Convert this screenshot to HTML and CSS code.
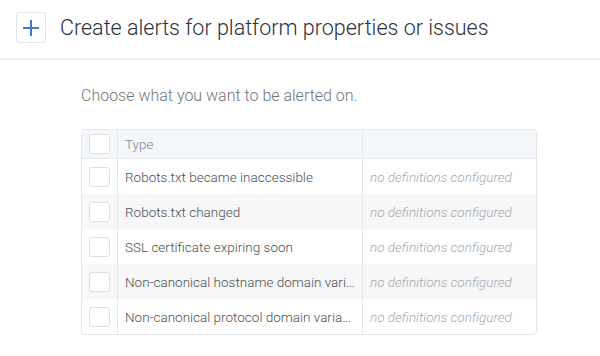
FILE: index.html
```html
<!DOCTYPE html>
<html>
<head>
<meta charset="utf-8">
<link rel="stylesheet" href="styles.css">
</head>
<body>
<header class="header">
  <div class="plus-box">
    <svg width="16" height="16" viewBox="0 0 16 16"><path d="M8 0V16M0 8H16" stroke="#3d7cc9" stroke-width="2" fill="none"/></svg>
  </div>
  <h1 class="title">Create alerts for platform properties or issues</h1>
</header>
<main class="content">
  <p class="lead">Choose what you want to be alerted on.</p>
  <div class="table">
    <div class="row head">
      <div class="cell check"><span class="box"></span></div>
      <div class="cell type">Type</div>
      <div class="cell def"></div>
    </div>
    <div class="row">
      <div class="cell check"><span class="box"></span></div>
      <div class="cell type">Robots.txt became inaccessible</div>
      <div class="cell def">no definitions configured</div>
    </div>
    <div class="row alt">
      <div class="cell check"><span class="box"></span></div>
      <div class="cell type">Robots.txt changed</div>
      <div class="cell def">no definitions configured</div>
    </div>
    <div class="row">
      <div class="cell check"><span class="box"></span></div>
      <div class="cell type">SSL certificate expiring soon</div>
      <div class="cell def">no definitions configured</div>
    </div>
    <div class="row alt">
      <div class="cell check"><span class="box"></span></div>
      <div class="cell type">Non-canonical hostname domain vari…</div>
      <div class="cell def">no definitions configured</div>
    </div>
    <div class="row">
      <div class="cell check"><span class="box"></span></div>
      <div class="cell type">Non-canonical protocol domain varia…</div>
      <div class="cell def">no definitions configured</div>
    </div>
  </div>
</main>
</body>
</html>
```
FILE: styles.css
```css
* { box-sizing: border-box; }
html, body { margin: 0; padding: 0; background: #fff; }
body { font-family: Roboto, "Liberation Sans", sans-serif; color: #333; width: 600px; height: 356px; overflow: hidden; }

.header {
  display: flex;
  align-items: center;
  height: 60px;
  padding: 0 0 3px 16px;
  border-bottom: 2px solid #f0f0f0;
}
.plus-box {
  width: 30px;
  height: 31px;
  border: 1px solid #e3e6ea;
  border-radius: 3px;
  display: flex;
  align-items: center;
  justify-content: center;
}
.title {
  margin: 0 0 0 14px;
  font-size: 21.5px;
  font-weight: 300;
  color: #2a313b;
}

.content { padding: 0 63px 0 81px; }
.lead {
  margin: 26px 0 23px;
  font-size: 16px;
  line-height: 20px;
  color: #72767a;
  font-weight: 300;
}
.table {
  width: 456px;
  border: 1px solid #e6e8eb;
  border-radius: 4px;
  overflow: hidden;
  font-size: 13.5px;
  font-weight: 300;
}
.row {
  display: flex;
  height: 35px;
}
.row.head {
  height: 29px;
  background: #f4f7fa;
  border-bottom: 1px solid #e6e8eb;
}
.row.alt { background: #f7f7f7; }
.cell {
  display: flex;
  align-items: center;
  white-space: nowrap;
}
.check {
  width: 36px;
  flex: none;
  justify-content: center;
  border-right: 1px solid #e6e8eb;
}
.box {
  width: 21px;
  height: 20px;
  border: 1px solid #dcdfe3;
  border-radius: 3px;
  background: #fff;
}
.type {
  width: 245px;
  flex: none;
  padding: 0 7px;
  color: #4a4f55;
  border-right: 1px solid #e6e8eb;
}
.head .type { color: #80858b; }
.def {
  flex: 1;
  padding-left: 7px;
  font-style: italic;
  color: #a3a9b0;
}
```
